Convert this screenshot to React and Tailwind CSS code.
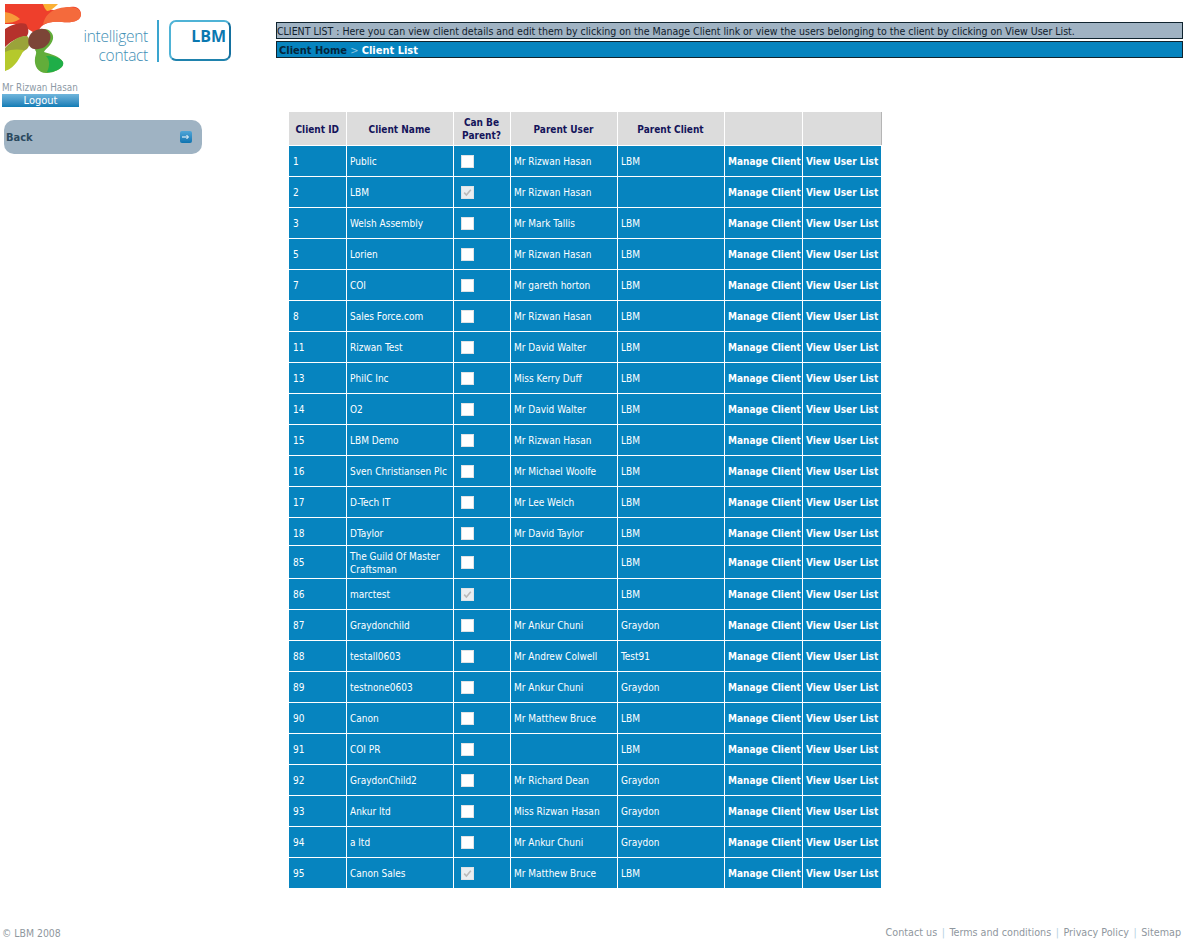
const rows = [
  ["1", "Public", false, "Mr Rizwan Hasan", "LBM"],
  ["2", "LBM", true, "Mr Rizwan Hasan", ""],
  ["3", "Welsh Assembly", false, "Mr Mark Tallis", "LBM"],
  ["5", "Lorien", false, "Mr Rizwan Hasan", "LBM"],
  ["7", "COI", false, "Mr gareth horton", "LBM"],
  ["8", "Sales Force.com", false, "Mr Rizwan Hasan", "LBM"],
  ["11", "Rizwan Test", false, "Mr David Walter", "LBM"],
  ["13", "PhilC Inc", false, "Miss Kerry Duff", "LBM"],
  ["14", "O2", false, "Mr David Walter", "LBM"],
  ["15", "LBM Demo", false, "Mr Rizwan Hasan", "LBM"],
  ["16", "Sven Christiansen Plc", false, "Mr Michael Woolfe", "LBM"],
  ["17", "D-Tech IT", false, "Mr Lee Welch", "LBM"],
  ["18", "DTaylor", false, "Mr David Taylor", "LBM", "h-[28px] pt-[5px]"],
  ["85", "The Guild Of Master Craftsman", false, "", "LBM", "h-[33px] pt-[2px]"],
  ["86", "marctest", true, "", "LBM"],
  ["87", "Graydonchild", false, "Mr Ankur Chuni", "Graydon"],
  ["88", "testall0603", false, "Mr Andrew Colwell", "Test91"],
  ["89", "testnone0603", false, "Mr Ankur Chuni", "Graydon"],
  ["90", "Canon", false, "Mr Matthew Bruce", "LBM"],
  ["91", "COI PR", false, "", "LBM"],
  ["92", "GraydonChild2", false, "Mr Richard Dean", "Graydon"],
  ["93", "Ankur ltd", false, "Miss Rizwan Hasan", "Graydon"],
  ["94", "a ltd", false, "Mr Ankur Chuni", "Graydon"],
  ["95", "Canon Sales", true, "Mr Matthew Bruce", "LBM"],
];

const font = "[font-family:'DejaVu_Sans',sans-serif] [font-stretch:condensed]";

function Box({ checked }) {
  return (
    <span className={"inline-flex w-[13px] h-[13px] align-middle items-center justify-center border border-[#dfe3e6] " + (checked ? "bg-[#e9eef1]" : "bg-white")}>
      {checked && (
        <svg width="9" height="9" viewBox="0 0 9 9">
          <path d="M1.2 4.6 L3.4 7 L7.8 1.8" fill="none" stroke="#b9b9b9" strokeWidth="1.6" />
        </svg>
      )}
    </span>
  );
}

function Logo() {
  return (
    <svg width="77" height="70" viewBox="5 4 77 70" className="block">
      <path d="M5 4 H43 C47 9 54 12 62 9 C70 6 80 5 81 14 C81 21 73 23 62 22 C52 21 42 23 39 30 L36 34 L20 24 L5 24 Z" fill="#ee3f2c" />
      <path d="M54 10 C64 6 80 5 81 14 C81 21 73 23 62 22 C54 21.5 47 22 43 25 C44 18 48 13 54 10 Z" fill="#f46a3c" />
      <path d="M43 4 H58 C54 8 50 11 47 11 C45 9 44 7 43 4 Z" fill="#fbb034" />
      <path d="M5 12 C11 13 17 16 20 19 C15 22 10 23 5 23 Z" fill="#f79a3a" />
      <path d="M5 29 C12 24 22 22 26 24 C29 29 29 33 27 36 C18 37 10 42 5 47 Z" fill="#b5322c" />
      <path d="M5 48 C11 41 20 35 27 36 C31 39 30 46 27 49 C22 52 14 58 5 71 Z" fill="#9aa33a" />
      <path d="M5 52 C10 49 18 49 24 50 C20 56 16 68 5 71 Z" fill="#b5c92c" />
      <path d="M44 29 C50 29 54 34 53 39 C51 46 46 48 44 52 C50 54 60 56 63 62 C65 68 54 73 46 73 C38 73 34 66 35 58 C36 54 37 52 35 50 Z" fill="#62ad3a" />
      <path d="M46 56 C52 56 60 57 63 62 C65 68 54 73 47 72 C50 66 50 60 46 56 Z" fill="#1fae48" />
      <path d="M40 29 C47 28 52 33 50 40 C48 47 40 50 34 49 C29 48 27 43 29 37 C31 32 35 30 40 29 Z" fill="#7c4537" />
    </svg>
  );
}

function Sidebar() {
  return (
    <aside className="w-[276px] shrink-0">
      <div className="flex items-start pl-[5px] pt-[4px] h-[79px]">
        <Logo />
        <div className="ml-[1px] mt-[23px] w-[65px] text-right text-[#3f8fb5] text-[15.5px] leading-[19px] font-light [font-family:'Open_Sans',sans-serif] tracking-[-0.3px]">
          <div>intelligent</div>
          <div>contact</div>
        </div>
        <div className="ml-[9px] mt-[16px] w-[2px] h-[42px] bg-[#3aa5cf]" />
        <div className="ml-[10px] mt-[16px] w-[62px] h-[41px] rounded-[7px] border-2 border-[#4fb3d6] border-r-[#14709f] border-b-[#1f82ad] text-right pr-[3px] pt-[4px] text-[#0a78b0] text-[16px] leading-[20px] font-bold [font-family:'Open_Sans',sans-serif]">
          LBM
        </div>
      </div>
      <div className="pl-[2px]">
        <div className={font + " mt-[2px] text-[9.8px] leading-[13px] text-[#8d9aa6]"}>Mr Rizwan Hasan</div>
        <div className={font + " w-[77px] h-[13px] text-center text-white text-[11px] leading-[13px] bg-gradient-to-b from-[#6fb6dc] to-[#0b7cb5]"}>Logout</div>
      </div>
      <div className="ml-[4px] mt-[13px] w-[198px] h-[34px] rounded-[10px] bg-[#9fb3c3] flex items-center justify-between pl-[2px] pr-[10px]">
        <span className={font + " pt-[3px] text-[11px] font-bold text-[#2c4a5f]"}>Back</span>
        <span className="w-[12px] h-[12px] rounded-[2px] bg-gradient-to-b from-[#4fa6d8] to-[#0b74b0] flex items-center justify-center">
          <svg width="8" height="6" viewBox="0 0 8 6"><path d="M0 3 H6 M4.5 1 L6.5 3 L4.5 5" stroke="#fff" strokeWidth="1" fill="none" /></svg>
        </span>
      </div>
    </aside>
  );
}

const th = "border border-white border-t-0 bg-[#dcdcdc] text-[#14145a] font-bold text-center align-middle p-0 pt-[2px] leading-[13px]";
const td = "border border-white align-middle pl-[3.5px] pr-[3px] pb-0 pt-[2px] text-white leading-[13px]";

function Table() {
  return (
    <table className={font + " ml-[13px] mt-[54px] w-[592px] table-fixed border-collapse text-[10px]"}>
      <colgroup>
        <col className="w-[57px]" />
        <col className="w-[107px]" />
        <col className="w-[57px]" />
        <col className="w-[107px]" />
        <col className="w-[107px]" />
        <col className="w-[78px]" />
        <col className="w-[79px]" />
      </colgroup>
      <thead>
        <tr className="h-[33px]">
          <th className={th + " border-l-0"}>Client ID</th>
          <th className={th}>Client Name</th>
          <th className={th}>Can Be<br />Parent?</th>
          <th className={th}>Parent User</th>
          <th className={th}>Parent Client</th>
          <th className={th}></th>
          <th className={th + " border-r-[#b5b5b5]"}></th>
        </tr>
      </thead>
      <tbody className="bg-[#0684bf]">
        {rows.map((r) => {
          const extra = r[5] || "h-[31px]";
          const height = extra.split(" ")[0];
          const pad = extra.split(" ")[1] || "";
          return (
            <tr key={r[0]} className={height}>
              <td className={td + " border-l-0 pl-[4px] " + pad}>{r[0]}</td>
              <td className={td + " " + pad}>{r[1]}</td>
              <td className={td + " pl-[7px] " + pad}><Box checked={r[2]} /></td>
              <td className={td + " " + pad}>{r[3]}</td>
              <td className={td + " " + pad}>{r[4]}</td>
              <td className={td + " font-bold whitespace-nowrap " + pad}>Manage Client</td>
              <td className={td + " font-bold whitespace-nowrap " + pad}>View User List</td>
            </tr>
          );
        })}
      </tbody>
    </table>
  );
}

function Footer() {
  const links = ["Contact us", "Terms and conditions", "Privacy Policy", "Sitemap"];
  return (
    <footer className={font + " flex justify-between items-center pl-[2px] pr-[16px] mt-[35px] text-[#8f979e] h-[20px]"}>
      <span className="text-[10.4px]">© LBM 2008</span>
      <span className="flex text-[10.7px]">
        {links.map((l, i) => (
          <span key={l}>
            {i > 0 && <span className="mx-[4.5px] text-[#b5d2df]">|</span>}
            {l}
          </span>
        ))}
      </span>
    </footer>
  );
}

export default function App() {
  return (
    <div className="w-[1197px] h-[942px] bg-white overflow-hidden">
      <div className="flex">
        <Sidebar />
        <main className="flex-1 pr-[14px] pt-[22px]">
          <div className={font + " h-[17px] border border-[#10242f] bg-[#a0b3c3] text-[10.5px] leading-[16px] text-[#10202c] whitespace-nowrap overflow-hidden"}>
            CLIENT LIST : Here you can view client details and edit them by clicking on the Manage Client link or view the users belonging to the client by clicking on View User List.
          </div>
          <div className={font + " mt-[2px] h-[17px] border border-[#10242f] bg-[#0684bf] text-[11px] leading-[17px] font-bold px-[2px]"}>
            <span className="text-[#04263c]">Client Home</span>
            <span className="text-[#8fc6e0] font-normal"> &gt; </span>
            <span className="text-white">Client List</span>
          </div>
          <Table />
        </main>
      </div>
      <Footer />
    </div>
  );
}
